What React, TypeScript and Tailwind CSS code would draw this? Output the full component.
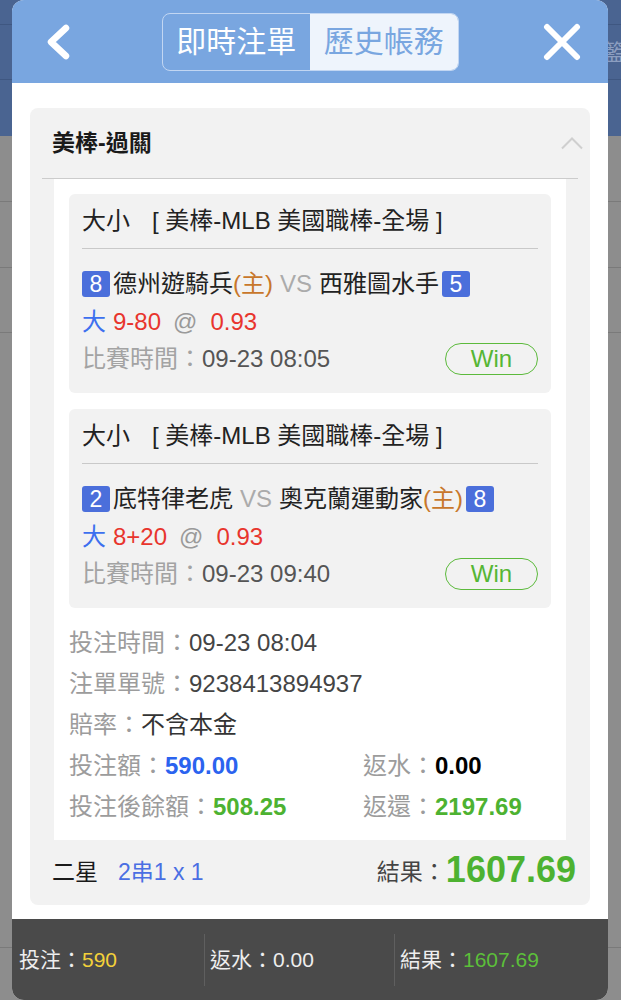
const FONT = "font-['Liberation_Sans','Noto_Sans_CJK_TC',sans-serif]";

type Side = { name: string; home?: boolean; score: string };

type Leg = {
  home: Side;
  away: Side;
  line: string;
  odds: string;
  time: string;
};

const legs: Leg[] = [
  {
    home: { name: "德州遊騎兵", home: true, score: "8" },
    away: { name: "西雅圖水手", score: "5" },
    line: "9-80",
    odds: "0.93",
    time: "09-23 08:05",
  },
  {
    home: { name: "底特律老虎", score: "2" },
    away: { name: "奧克蘭運動家", home: true, score: "8" },
    line: "8+20",
    odds: "0.93",
    time: "09-23 09:40",
  },
];

function Badge({ n }: { n: string }) {
  return (
    <span className="inline-flex h-[26px] w-[28px] items-center justify-center rounded-[3px] bg-[#4b6fdb] text-[23px] leading-none text-white">
      {n}
    </span>
  );
}

function LegCard({ leg }: { leg: Leg }) {
  return (
    <div className="rounded-[6px] bg-[#f2f2f2] px-[13px] pb-[18px] pt-[12px]">
      <div className="flex h-[30px] items-center text-[24px] leading-[30px] text-[#222]">
        <span>大小</span>
        <span className="ml-[22px]">[ 美棒-MLB 美國職棒-全場 ]</span>
      </div>
      <div className="mt-[12px] h-px bg-[#c9c9c9]" />

      <div className="mt-[20px] flex h-[30px] items-center text-[24px] leading-[30px] text-[#222]">
        <Badge n={leg.home.score} />
        <span className="ml-[3px]">{leg.home.name}</span>
        {leg.home.home && <span className="text-[#c8772b]">(主)</span>}
        <span className="mx-[7px] text-[#ababab]">VS</span>
        <span>{leg.away.name}</span>
        {leg.away.home && <span className="text-[#c8772b]">(主)</span>}
        <span className="ml-[3px] flex">
          <Badge n={leg.away.score} />
        </span>
      </div>

      <div className="mt-[8px] flex h-[30px] items-center text-[24px] leading-[30px]">
        <span className="text-[#3d70ef]">大</span>
        <span className="ml-[7px] text-[#e8352d]">{leg.line}</span>
        <span className="ml-[12px] text-[#9a9a9a]">@</span>
        <span className="ml-[13px] text-[#e8352d]">{leg.odds}</span>
      </div>

      <div className="mt-[6px] flex h-[32px] items-center justify-between text-[24px] leading-[30px]">
        <div>
          <span className="text-[#a3a3a3]">比賽時間：</span>
          <span className="text-[#555]">{leg.time}</span>
        </div>
        <div className="flex h-[32px] w-[93px] items-center justify-center rounded-full border-[1.5px] border-[#5cba3c] text-[24px] text-[#56b635]">
          Win
        </div>
      </div>
    </div>
  );
}

function InfoRow({ label, children }: { label: string; children: React.ReactNode }) {
  return (
    <div className="flex items-center">
      <span className="text-[#9c9c9c]">{label}</span>
      {children}
    </div>
  );
}

function BetCard() {
  return (
    <div className="rounded-[8px] bg-[#f2f2f2] px-[12px]">
      {/* title row */}
      <div className="flex h-[71px] items-center justify-between border-b border-[#cccccc] pl-[10px]">
        <span className="text-[23px] font-bold text-[#1a1a1a]">美棒-過關</span>
        <svg width="24" height="14" viewBox="0 0 24 14" fill="none" className="-mr-[6px]" aria-hidden="true">
          <path d="M2 12.5L12 2.5l10 10" stroke="#cfcfcf" strokeWidth="2" />
        </svg>
      </div>

      {/* legs + bet details */}
      <div className="mx-[12px] flex flex-col bg-white px-[15px] pb-[13px] pt-[15px]">
        <div className="flex flex-col gap-[16px]">
          {legs.map((leg, i) => (
            <LegCard key={i} leg={leg} />
          ))}
        </div>

        <div className="mt-[14px] flex flex-col text-[24px] leading-[41px]">
          <InfoRow label="投注時間：">
            <span className="text-[#444]">09-23 08:04</span>
          </InfoRow>
          <InfoRow label="注單單號：">
            <span className="text-[#444]">9238413894937</span>
          </InfoRow>
          <InfoRow label="賠率：">
            <span className="text-[#333]">不含本金</span>
          </InfoRow>
          <div className="flex">
            <div className="w-[294px]">
              <InfoRow label="投注額：">
                <span className="font-bold text-[#2b63ef]">590.00</span>
              </InfoRow>
            </div>
            <InfoRow label="返水：">
              <span className="font-bold text-black">0.00</span>
            </InfoRow>
          </div>
          <div className="flex">
            <div className="w-[294px]">
              <InfoRow label="投注後餘額：">
                <span className="font-bold text-[#4db231]">508.25</span>
              </InfoRow>
            </div>
            <InfoRow label="返還：">
              <span className="font-bold text-[#4db231]">2197.69</span>
            </InfoRow>
          </div>
        </div>
      </div>

      {/* footer */}
      <div className="flex h-[65px] items-center justify-between pl-[10px] pr-[2px]">
        <div className="flex items-center text-[23px]">
          <span className="text-[#1a1a1a]">二星</span>
          <span className="ml-[20px] text-[#4a6fe3]">2串1 x 1</span>
        </div>
        <div className="flex items-center">
          <span className="text-[23px] text-[#444]">結果：</span>
          <span className="-mt-[6px] text-[36px] font-bold leading-none text-[#4db231]">1607.69</span>
        </div>
      </div>
    </div>
  );
}

function Modal() {
  return (
    <div className="absolute left-[12px] top-0 flex h-[1000px] w-[596px] flex-col overflow-hidden rounded-[12px] bg-white">
      {/* header */}
      <div className="grid h-[83px] shrink-0 grid-cols-[1fr_auto_1fr] items-center bg-[#79a6e0]">
        <div className="pl-[32px]">
          <svg width="28" height="36" viewBox="0 0 28 36" fill="none" aria-hidden="true">
            <path d="M22 4L7 18l15 14" stroke="white" strokeWidth="6.5" strokeLinecap="round" strokeLinejoin="round" />
          </svg>
        </div>
        <div className="flex h-[58px] w-[297px] overflow-hidden rounded-[8px] border border-[#c2d6f2] text-[30px] leading-none">
          <div className="flex flex-1 items-center justify-center text-white">即時注單</div>
          <div className="flex flex-1 items-center justify-center bg-[#eef4fc] text-[#79a6e0]">歷史帳務</div>
        </div>
        <div className="flex justify-end pr-[27px]">
          <svg width="38" height="38" viewBox="0 0 38 38" fill="none" aria-hidden="true">
            <path d="M4 4l30 30M34 4L4 34" stroke="white" strokeWidth="6" strokeLinecap="round" />
          </svg>
        </div>
      </div>

      {/* body */}
      <div className="flex-1 px-[18px] pt-[25px]">
        <BetCard />
      </div>

      {/* summary bar */}
      <div className="flex h-[81px] shrink-0 items-center bg-[#4a4a4a] text-[21px] text-[#eeeeee]">
        <div className="w-[192px] pl-[7px]">
          投注：<span className="text-[#f3d13a]">590</span>
        </div>
        <div className="h-[52px] w-px bg-[#5f5f5f]" />
        <div className="w-[189px] pl-[5px]">返水：0.00</div>
        <div className="h-[52px] w-px bg-[#5f5f5f]" />
        <div className="flex-1 pl-[5px]">
          結果：<span className="text-[#5cbf3a]">1607.69</span>
        </div>
      </div>
    </div>
  );
}

export default function App() {
  return (
    <div className={`relative h-[1000px] w-[621px] overflow-hidden bg-[#8d8d8d] ${FONT}`}>
      {/* page behind the dimmed overlay */}
      <div className="flex flex-col">
        <div className="h-[25px] border-b border-[#3f5781] bg-[#4a6491]" />
        <div className="flex h-[55px] items-center justify-end border-b border-[#3f5781] bg-[#4a6491]">
          <span className="-mr-[4px] text-[22px] text-[#8c9ec0]">籃</span>
        </div>
        <div className="h-[56px] bg-[#4a6491]" />
        <div className="h-[66px] border-b border-[#7a7a7a]" />
        <div className="h-[66px] border-b border-[#7a7a7a]" />
        <div className="h-[65px] border-b border-[#7a7a7a]" />
        <div className="h-[615px] border-b border-[#7a7a7a]" />
      </div>

      <Modal />
    </div>
  );
}
